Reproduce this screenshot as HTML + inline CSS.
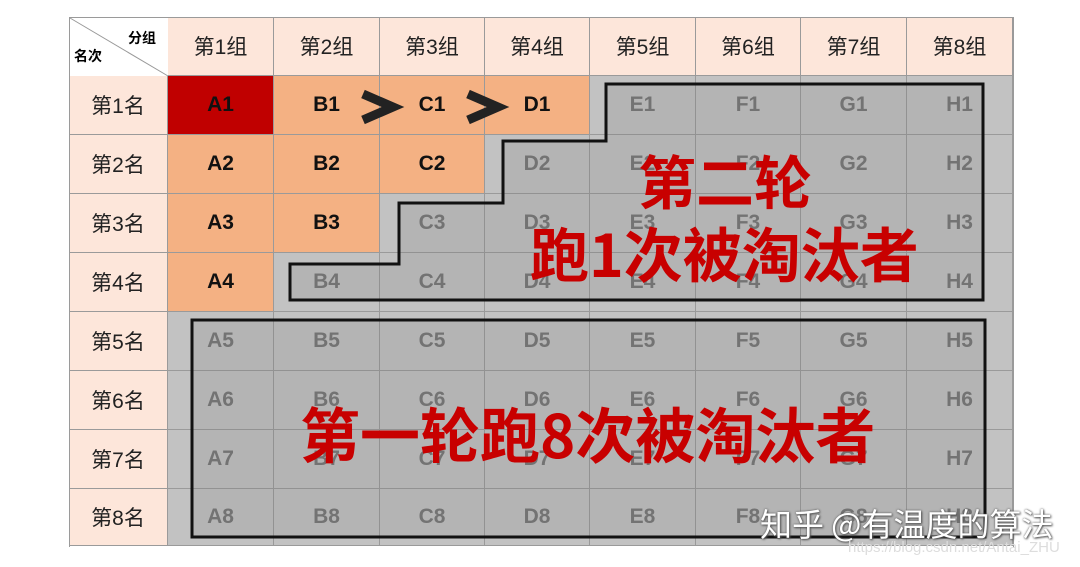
<!DOCTYPE html>
<html><head><meta charset="utf-8"><style>
body{margin:0;width:1080px;height:567px;background:#fff;position:relative;overflow:hidden;font-family:"Liberation Sans","Noto Sans CJK SC",sans-serif}
.c{position:absolute;box-sizing:border-box;border-right:1px solid #9a9a9a;border-bottom:1px solid #9a9a9a;display:flex;align-items:center;justify-content:center;font-size:21px}
.h{background:#fde6da;color:#222}
.o{background:#f4b183;color:#111;font-weight:bold}
.r{background:#c00000;color:#111;font-weight:bold}
.g{background:#c2c2c2;color:#777;font-weight:bold}
svg{position:absolute;left:0;top:0}
.big{position:absolute;color:#c80000;font-weight:bold;font-family:"Noto Sans CJK SC",sans-serif;white-space:nowrap}
</style></head><body>
<div id="g"></div>
<div style="position:absolute;left:69px;top:17px;width:945px;height:530px;border-left:1px solid #9a9a9a;border-top:1px solid #9a9a9a;border-right:1px solid #9a9a9a;box-sizing:border-box"></div>
<svg width="1080" height="567">
<line x1="70" y1="18" x2="168" y2="76" stroke="#999" stroke-width="1"/>
<polygon points="606,84 983,84 983,300 290,300 290,264 399,264 399,203 503,203 503,141 606,141" fill="rgba(90,90,90,0.13)" stroke="#111" stroke-width="3"/>
<rect x="192" y="320" width="793" height="217" fill="rgba(90,90,90,0.13)" stroke="#111" stroke-width="3"/>
<polyline points="363,94 393,107 363,120" fill="none" stroke="#222" stroke-width="9"/>
<polyline points="468,94 498,107 468,120" fill="none" stroke="#222" stroke-width="9"/>
</svg>
<div style="position:absolute;left:128px;top:28px;font-size:14px;font-weight:bold">分组</div>
<div style="position:absolute;left:74px;top:46px;font-size:14px;font-weight:bold">名次</div>
<div class="big" style="left:638px;top:143px;font-size:58px;line-height:72px">第二轮</div>
<div class="big" style="left:530px;top:216px;font-size:59px;line-height:72px">跑1次被淘汰者</div>
<div class="big" style="left:300px;top:395px;font-size:60px;line-height:76px">第一轮跑8次被淘汰者</div>
<div style="position:absolute;left:760px;top:500px;font-size:32px;color:#fff;text-shadow:0 0 2px #555,1px 1px 2px #555;font-family:'Noto Sans CJK SC',sans-serif;white-space:nowrap">知乎 @有温度的算法</div>
<div style="position:absolute;left:848px;top:539px;font-size:15px;color:#ddd;white-space:nowrap">https://blog.csdn.net/Antai_ZHU</div>
<script>
var xs=[69,168,274,380,485,590,696,801,907,1013],ys=[17,76,135,194,253,312,371,430,489,546];
var L="ABCDEFGH",h="";
for(var r=0;r<9;r++)for(var c=0;c<9;c++){
 if(r==0&&c==0)continue;
 var cls,t;
 if(r==0){cls="h";t="第"+c+"组";}
 else if(c==0){cls="h";t="第"+r+"名";}
 else{t=L[c-1]+r;cls=(r==1&&c==1)?"r":(r<=4&&c<=5-r)?"o":"g";}
 h+='<div class="c '+cls+'" style="left:'+xs[c]+'px;top:'+ys[r]+'px;width:'+(xs[c+1]-xs[c])+'px;height:'+(ys[r+1]-ys[r])+'px">'+t+'</div>';
}
document.getElementById("g").innerHTML=h;
</script>
</body></html>
